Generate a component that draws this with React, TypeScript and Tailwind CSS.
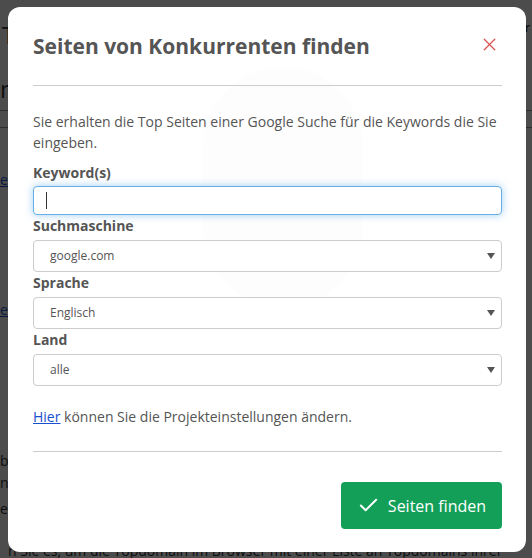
import { Check, X } from "lucide-react";

const selects = [
  { label: "Suchmaschine", value: "google.com" },
  { label: "Sprache", value: "Englisch" },
  { label: "Land", value: "alle" },
];

function Caret() {
  return (
    <svg width="8" height="6" viewBox="0 0 8 6" className="absolute right-[6px] top-1/2 -translate-y-1/2">
      <path d="M0 0h8L4 6z" fill="#555" />
    </svg>
  );
}

export default function App() {
  return (
    <div
      className="relative h-[558px] w-[532px] overflow-hidden bg-white text-[#333]"
      style={{ fontFamily: '"Open Sans", sans-serif' }}
    >
      {/* page behind the modal */}
      <div className="flex flex-col pt-[18px] text-[22px] leading-[34px]">
        <div className="flex justify-between pr-[2px] text-[13px] leading-[18px]">
          <span className="pl-[2px] text-[24px] leading-[34px]">Themen</span>
          <span className="font-semibold">Über</span>
        </div>
        <div className="pt-[20px] text-[24px]">n</div>
        <div className="mt-[4px] border-t border-[#999]" />
        <div className="mt-[16px] border-t border-[#999]" />
        <div className="pt-[42px] text-[14px] leading-[20px] text-[#1a4fd0] underline">eingeben</div>
        <div className="pt-[110px] text-[14px] leading-[20px] text-[#1a4fd0] underline">ep</div>
        <div className="pt-[130px] text-[14px] leading-[22px]">
          <div>be</div>
          <div>ne</div>
          <div className="pt-[4px]">e e</div>
          <div className="pt-[20px] pl-[8px]">n Sie es, um die Topdomain im Browser mit einer Liste an Topdomains ihrer</div>
        </div>
      </div>

      {/* overlay */}
      <div className="absolute inset-0 bg-black/70" />

      {/* modal */}
      <div className="absolute left-[8px] top-[7px] flex h-[545px] w-[518px] flex-col overflow-hidden rounded-[12px] bg-white pl-[25px] pr-[24px] text-[#555]">
        <div className="pointer-events-none absolute left-[195px] top-[60px] h-[240px] w-[160px] rounded-full bg-[#fdfdfd]" />
        <div className="relative flex items-start justify-between pt-[22px] pb-[22px]">
          <h1 className="text-[21px] font-bold leading-[34px] text-[#555]">Seiten von Konkurrenten finden</h1>
          <X className="mr-[2px] mt-[5px] h-[21px] w-[21px] text-[#d9534f]" strokeWidth={1.5} />
        </div>
        <div className="relative border-t border-[#cccccc]" />
        <p className="relative pt-[25px] text-[14px] leading-[21px]">
          Sie erhalten die Top Seiten einer Google Suche für die Keywords die Sie eingeben.
        </p>
        <label className="relative pt-[10px] text-[14px] font-bold leading-[20px]">Keyword(s)</label>
        <div className="relative mt-[3px] flex h-[29px] items-center rounded-[4px] border border-[#66afe9] bg-white pl-[12px] shadow-[0_0_8px_rgba(102,175,233,0.6)]">
          <span className="h-[17px] w-px bg-[#333]" />
        </div>
        {selects.map((s) => (
          <div key={s.label} className="relative flex flex-col">
            <label className="pt-[1px] text-[14px] font-bold leading-[20px]">{s.label}</label>
            <div className="relative mt-[4px] flex h-[32px] items-center rounded-[4px] border border-[#cccccc] bg-white pl-[16px] text-[12px] text-[#555]">
              {s.value}
              <Caret />
            </div>
          </div>
        ))}
        <p className="relative pt-[21px] text-[14px] leading-[20px]">
          <a className="text-[#1a4fd0] underline">Hier</a> können Sie die Projekteinstellungen ändern.
        </p>
        <div className="relative mt-[24px] border-t border-[#cccccc]" />
        <div className="relative flex justify-end pt-[30px]">
          <button className="flex h-[47px] w-[161px] items-center justify-center gap-[8px] rounded-[4px] bg-[#139f58] text-[16px] text-white">
            <Check className="h-[23px] w-[23px]" strokeWidth={2} />
            Seiten finden
          </button>
        </div>
      </div>
    </div>
  );
}
